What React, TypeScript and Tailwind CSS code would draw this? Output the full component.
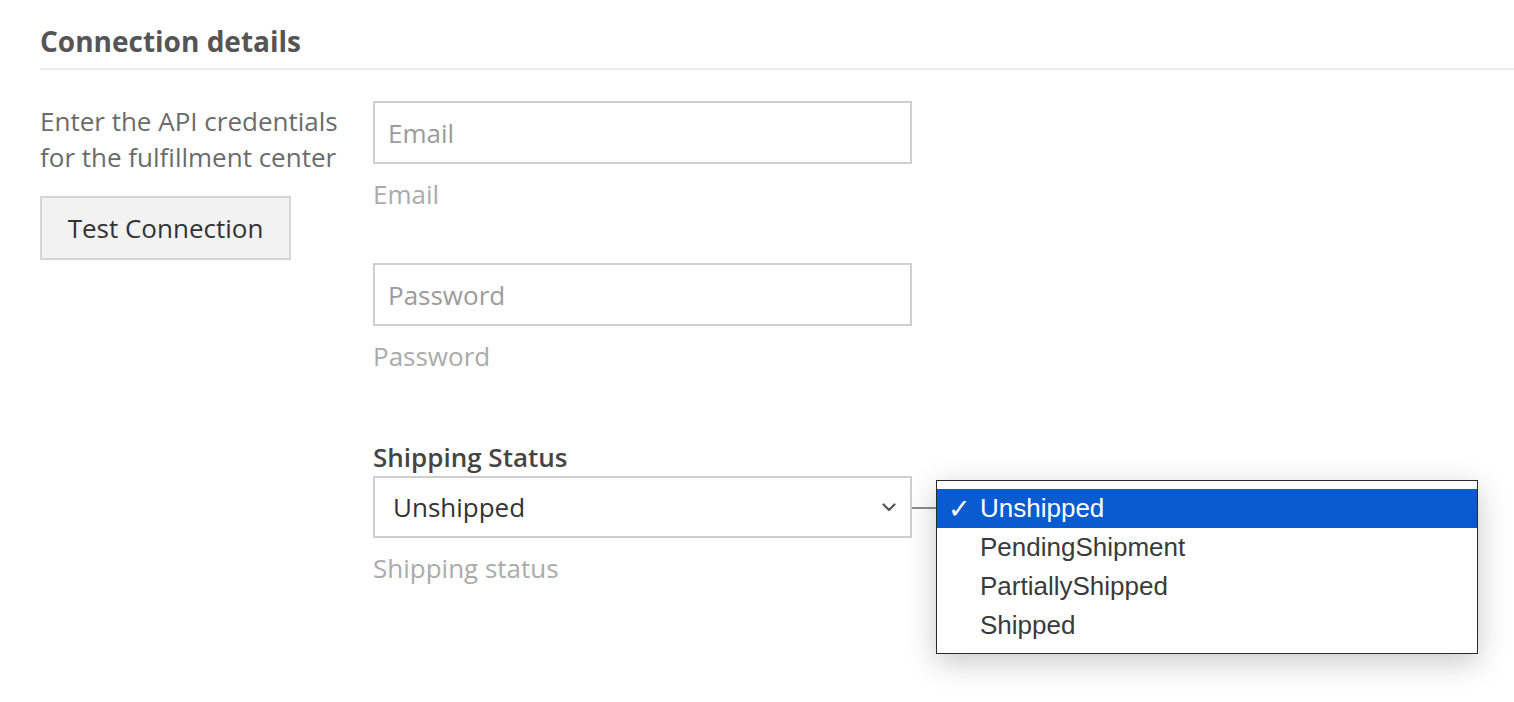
const helper = 'mt-3 text-[26px] leading-[36px] text-[#ababab]';
const input =
  'block h-[63px] w-[539px] border-2 border-[#cfcfcf] bg-white px-[13px] text-[26px] text-[#333] outline-none placeholder:text-[#9b9b9b]';

const options = ['Unshipped', 'PendingShipment', 'PartiallyShipped', 'Shipped'];

function App() {
  return (
    <div className="relative h-[702px] w-[1514px] overflow-hidden bg-white font-['Open_Sans',sans-serif]">
      <div className="pl-[40px] pt-[22px]">
        <h2 className="text-[28px] font-bold leading-[38px] text-[#555]">Connection details</h2>
        <div className="mt-[8px] h-[2px] bg-[#ececec]" />

        <div className="mt-[31px] flex">
          {/* Left column */}
          <div className="w-[333px] shrink-0 pt-[2px]">
            <p className="text-[26px] leading-[36px] text-[#6b6b6b]">
              Enter the API credentials
              <br />
              for the fulfillment center
            </p>
            <button className="mt-[21px] h-[64px] w-[251px] border-2 border-[#d6d6d6] bg-[#f2f2f2] text-[26px] text-[#333]">
              Test Connection
            </button>
          </div>

          {/* Right column */}
          <div className="w-[539px]">
            <input className={input} placeholder="Email" />
            <div className={helper}>Email</div>

            <input className={`${input} mt-[51px]`} placeholder="Password" type="password" />
            <div className={helper}>Password</div>

            <label className="mt-[64px] block text-[26px] font-semibold leading-[38px] text-[#444]">
              Shipping Status
            </label>
            <div className="flex h-[62px] items-center justify-between border-2 border-[#cfcfcf] bg-white pl-[18px] pr-[14px]">
              <span className="text-[26px] text-[#333]">Unshipped</span>
              <svg width="14" height="9" viewBox="0 0 14 9" fill="none">
                <path d="M1.5 1.5 7 7l5.5-5.5" stroke="#555" strokeWidth="2.2" strokeLinecap="round" strokeLinejoin="round" />
              </svg>
            </div>
            <div className={helper}>Shipping status</div>
          </div>
        </div>
      </div>

      {/* connector */}
      <div className="absolute left-[912px] top-[507px] h-[2px] w-[25px] bg-[#8c8c8c]" />

      {/* Native select popup */}
      <div className="absolute left-[936px] top-[480px] w-[542px] border border-[#2a2a2a] bg-white pb-[8px] pt-[8px] font-['Liberation_Sans',Arial,sans-serif] shadow-[0_8px_28px_rgba(0,0,0,0.22)]">
        {options.map((o, i) => (
          <div
            key={o}
            className={`flex h-[39px] items-center text-[26px] ${
              i === 0 ? 'bg-[#0a5bd0] text-white' : 'text-[#3a3a3a]'
            }`}
          >
            <span className="w-[43px] pl-[11px] font-['DejaVu_Sans',sans-serif] text-[27px] font-bold leading-none">
              {i === 0 ? '✓' : ''}
            </span>
            {o}
          </div>
        ))}
      </div>
    </div>
  );
}

export default App;
